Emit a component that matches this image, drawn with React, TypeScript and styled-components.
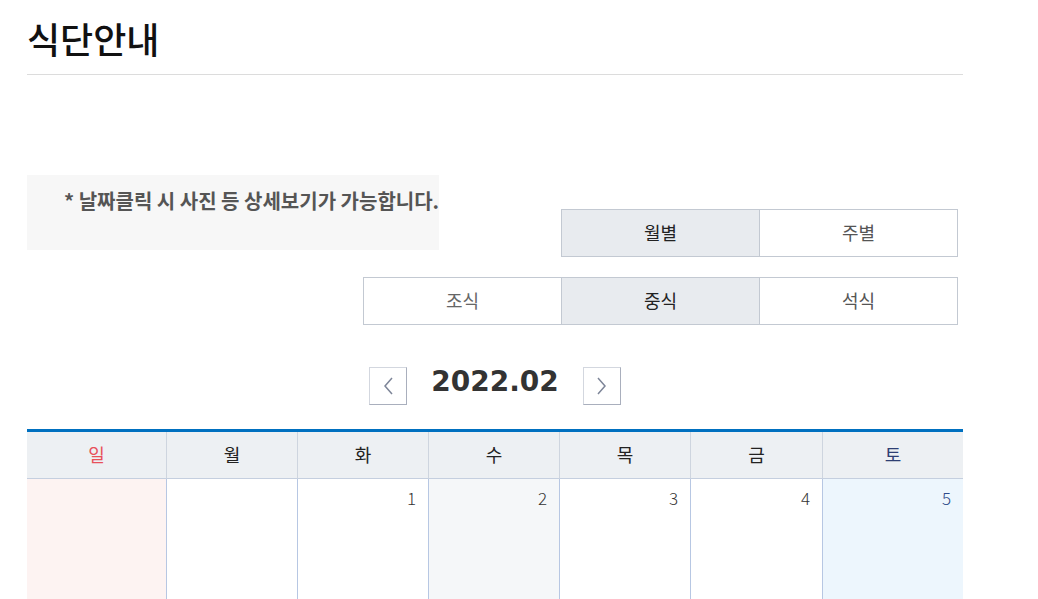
import { useState } from 'react';
import styled, { createGlobalStyle } from 'styled-components';

export default App;

type Day = {
   label: string;
   kind?: 'sun' | 'sat';
};

const DAYS: Day[] = [
   { label: '일', kind: 'sun' },
   { label: '월' },
   { label: '화' },
   { label: '수' },
   { label: '목' },
   { label: '금' },
   { label: '토', kind: 'sat' },
];

// first week of 2022.02 (starts on Tuesday)
const FIRST_WEEK: (number | null)[] = [null, null, 1, 2, 3, 4, 5];
const TODAY = 2;

function App() {
   const [view, setView] = useState('월별');
   const [meal, setMeal] = useState('중식');

   return (
      <Page>
         <GlobalStyle />
         <Title>식단안내</Title>

         <Controls>
            <Notice>* 날짜클릭 시 사진 등 상세보기가 가능합니다.</Notice>

            <ViewTabs>
               {['월별', '주별'].map((item) => (
                  <Tab
                     key={item}
                     $active={view === item}
                     onClick={() => setView(item)}
                  >
                     {item}
                  </Tab>
               ))}
            </ViewTabs>

            <MealTabs>
               {['조식', '중식', '석식'].map((item) => (
                  <Tab
                     key={item}
                     $active={meal === item}
                     $muted={item === '조식'}
                     onClick={() => setMeal(item)}
                  >
                     {item}
                  </Tab>
               ))}
            </MealTabs>
         </Controls>

         <MonthNav>
            <NavButton aria-label='이전 달'>
               <Chevron dir='left' />
            </NavButton>
            <MonthTitle>2022.02</MonthTitle>
            <NavButton aria-label='다음 달'>
               <Chevron dir='right' />
            </NavButton>
         </MonthNav>

         <Calendar>
            {DAYS.map((day) => (
               <HeadCell key={day.label} $kind={day.kind}>
                  {day.label}
               </HeadCell>
            ))}
            {FIRST_WEEK.map((date, i) => (
               <DateCell
                  key={i}
                  $kind={DAYS[i].kind}
                  $today={date === TODAY}
               >
                  {date && <DateNum $kind={DAYS[i].kind}>{date}</DateNum>}
               </DateCell>
            ))}
         </Calendar>
      </Page>
   );
}

const Chevron = ({ dir }: { dir: 'left' | 'right' }) => (
   <svg width='12' height='22' viewBox='0 0 12 22' fill='none'>
      <path
         d={dir === 'left' ? 'M10 3 L3 11 L10 19' : 'M2 3 L9 11 L2 19'}
         stroke='#7d8598'
         strokeWidth='1.5'
      />
   </svg>
);

const GlobalStyle = createGlobalStyle`
   body {
      margin: 0;
      background: #fff;
      font-family: 'Noto Sans CJK KR', 'Noto Sans', sans-serif;
      color: #222;
   }
`;

const Page = styled.div`
   width: 936px;
   padding: 0 0 0 27px;
`;

const Title = styled.h1`
   margin: 0;
   padding: 14px 0 12px;
   font-size: 36px;
   font-weight: 500;
   line-height: 48px;
   color: #111;
   border-bottom: 1px solid #dcdcdc;
`;

const Controls = styled.div`
   display: grid;
   grid-template-columns: 412px 1fr;
   row-gap: 20px;
   margin-top: 100px;
`;

const Notice = styled.p`
   margin: 0;
   height: 75px;
   padding: 11px 0 0 37px;
   box-sizing: border-box;
   background: #f7f7f7;
   font-size: 20px;
   font-weight: 700;
   color: #555;
   white-space: nowrap;
   align-self: start;
`;

const ViewTabs = styled.div`
   display: flex;
   justify-self: end;
   margin: 34px 5px 0 0;
`;

const MealTabs = styled(ViewTabs)`
   grid-column: 1 / -1;
   margin-top: 0;
`;

const Tab = styled.button<{ $active?: boolean; $muted?: boolean }>`
   width: 199px;
   height: 48px;
   box-sizing: border-box;
   border: 1px solid #c3c9d2;
   margin-left: -1px;
   padding: 0 0 3px;
   background: ${(p) => (p.$active ? '#e8ebef' : '#fff')};
   color: ${(p) => (p.$active ? '#222' : p.$muted ? '#666' : '#555')};
   font-family: inherit;
   font-size: 18px;
   cursor: pointer;

   &:first-child {
      margin-left: 0;
   }
`;

const MonthNav = styled.div`
   display: flex;
   justify-content: center;
   align-items: flex-start;
   gap: 24px;
   margin: 42px 0 24px;
`;

const NavButton = styled.button`
   width: 38px;
   height: 38px;
   padding: 0;
   display: flex;
   align-items: center;
   justify-content: center;
   background: #fff;
   border: 1px solid #d3d7df;
   border-right-color: #a9afbd;
   border-bottom-color: #a9afbd;
   cursor: pointer;
`;

const MonthTitle = styled.h2`
   margin: 0;
   font-family: 'DejaVu Sans', sans-serif;
   font-size: 28px;
   font-weight: 700;
   color: #333;
   line-height: 30px;
`;

const Calendar = styled.div`
   display: grid;
   grid-template-columns: 139px 131px 131px 131px 131px 132px 141px;
   border-top: 3px solid #0070c0;
`;

const dayColor = (kind?: 'sun' | 'sat') =>
   kind === 'sun' ? '#e8505b' : kind === 'sat' ? '#2e3f73' : '#222';

const HeadCell = styled.div<{ $kind?: 'sun' | 'sat' }>`
   height: 47px;
   padding-bottom: 3px;
   box-sizing: border-box;
   display: flex;
   align-items: center;
   justify-content: center;
   background: #edf0f3;
   border-left: 1px solid #ced5df;
   border-bottom: 1px solid #c5cfdf;
   font-size: 18px;
   color: ${(p) => dayColor(p.$kind)};

   &:first-child {
      border-left: 0;
   }
`;

const DateCell = styled.div<{ $kind?: 'sun' | 'sat'; $today?: boolean }>`
   height: 125px;
   padding: 6px 12px 0 0;
   box-sizing: border-box;
   text-align: right;
   border-left: 1px solid #b7c7e3;
   background: ${(p) =>
      p.$kind === 'sun'
         ? '#fdf3f2'
         : p.$kind === 'sat'
           ? '#edf6fd'
           : p.$today
             ? '#f5f7f9'
             : '#fff'};

   &:nth-child(8) {
      border-left: 0;
   }
`;

const DateNum = styled.span<{ $kind?: 'sun' | 'sat' }>`
   font-size: 17px;
   font-weight: 300;
   color: ${(p) => (p.$kind === 'sat' ? '#2e4a8a' : '#333')};
`;
